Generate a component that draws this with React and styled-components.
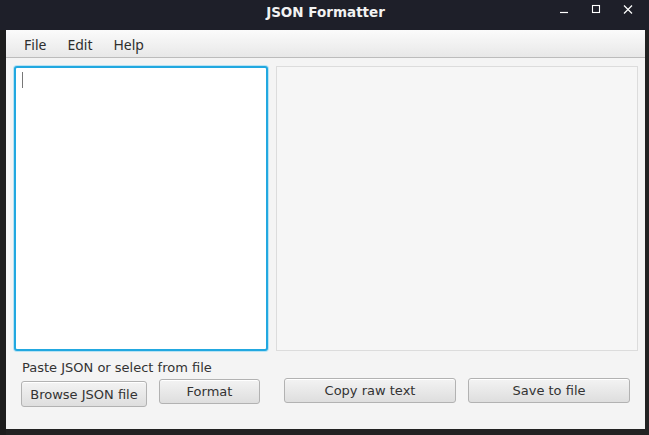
import React from 'react';
import styled, { createGlobalStyle } from 'styled-components';

const GlobalStyle = createGlobalStyle`
  html, body {
    margin: 0;
    padding: 0;
    background: #1f1f1f;
    overflow: hidden;
  }
  * { box-sizing: border-box; }
`;

export default function App() {
  return (
    <>
      <GlobalStyle />
      <SScreen>
        <STitleBar>
          <STitle>JSON Formatter</STitle>
          <SWinControls>
            <SWinButton aria-label="minimize">
              <svg width="12" height="12" viewBox="0 0 12 12">
                <path d="M2 8.5h8" stroke="#fff" strokeWidth="1.2" />
              </svg>
            </SWinButton>
            <SWinButton aria-label="maximize">
              <svg width="12" height="12" viewBox="0 0 12 12">
                <rect x="2.5" y="1.5" width="7" height="7" fill="none" stroke="#fff" strokeWidth="1.1" />
              </svg>
            </SWinButton>
            <SWinButton aria-label="close">
              <svg width="12" height="12" viewBox="0 0 12 12">
                <path d="M2 1.5l8 8M10 1.5l-8 8" stroke="#fff" strokeWidth="1.2" />
              </svg>
            </SWinButton>
          </SWinControls>
        </STitleBar>
        <SDesk>
          <SGutter />
          <SWindow>
            <SMenuBar>
              <SMenuItem>File</SMenuItem>
              <SMenuItem>Edit</SMenuItem>
              <SMenuItem>Help</SMenuItem>
            </SMenuBar>
            <SBody>
              <SEditors>
                <SInput>
                  <SCaret />
                </SInput>
                <SOutput />
              </SEditors>
              <SFooter>
                <SLeftControls>
                  <SHint>Paste JSON or select from file</SHint>
                  <SButtonRow>
                    <SButton $w={126} $h={26} $mt={2}>Browse JSON file</SButton>
                    <SButton $w={101} $h={25}>Format</SButton>
                  </SButtonRow>
                </SLeftControls>
                <SRightControls>
                  <SButton $w={172} $h={25}>Copy raw text</SButton>
                  <SButton $w={162} $h={25}>Save to file</SButton>
                </SRightControls>
              </SFooter>
            </SBody>
          </SWindow>
        </SDesk>
      </SScreen>
    </>
  );
}

const SScreen = styled.div`
  width: 649px;
  height: 435px;
  display: flex;
  flex-direction: column;
  background: #222222;
`;

const STitleBar = styled.div`
  height: 30px;
  flex: none;
  background: #1e1f29;
  position: relative;
  display: flex;
  align-items: center;
  justify-content: center;
`;

const STitle = styled.div`
  font-family: "DejaVu Sans", "Noto Sans", sans-serif;
  font-weight: bold;
  font-size: 13.5px;
  color: #f2f2f2;
  margin-top: -6px;
  margin-left: 2px;
`;

const SWinControls = styled.div`
  position: absolute;
  right: 15px;
  top: 3px;
  display: flex;
  gap: 19px;
`;

const SWinButton = styled.div`
  width: 13px;
  height: 13px;
  display: flex;
  align-items: center;
  justify-content: center;
`;

const SDesk = styled.div`
  flex: 1;
  display: flex;
`;

const SGutter = styled.div`
  width: 6px;
  flex: none;
  background: #1d1d1d;
`;

const SWindow = styled.div`
  width: 639px;
  height: 399px;
  flex: none;
  display: flex;
  flex-direction: column;
  background: #f4f4f4;
`;

const SMenuBar = styled.div`
  height: 28px;
  flex: none;
  display: flex;
  align-items: center;
  padding-left: 12px;
  background: linear-gradient(#fbfbfb, #e8e8e8);
  border-bottom: 1px solid #bcbcbc;
`;

const SMenuItem = styled.div`
  font-family: "Noto Sans", "DejaVu Sans", sans-serif;
  font-size: 14px;
  color: #2e2e2e;
  padding: 0 6px;
  margin-right: 9px;
  margin-top: 1px;
`;

const SBody = styled.div`
  flex: 1;
  display: flex;
  flex-direction: column;
  padding: 8px 7px 0 8px;
`;

const SEditors = styled.div`
  height: 285px;
  display: flex;
  gap: 8px;
`;

const SInput = styled.div`
  width: 254px;
  background: #fff;
  border: 2px solid #22a8e0;
  border-radius: 3px;
  box-shadow: 0 0 0 1px #b8e3f4;
  padding: 4px 6px;
`;

const SCaret = styled.div`
  width: 1px;
  height: 16px;
  background: #777;
`;

const SOutput = styled.div`
  flex: 1;
  background: #f6f6f6;
  border: 1px solid #dcdcdc;
`;

const SFooter = styled.div`
  display: flex;
  justify-content: space-between;
  padding-top: 9px;
`;

const SLeftControls = styled.div`
  display: flex;
  flex-direction: column;
  padding-left: 7px;
`;

const SHint = styled.div`
  font-family: "DejaVu Sans", sans-serif;
  font-size: 13px;
  color: #333;
  line-height: 16px;
  margin-left: 1px;
  margin-bottom: 3px;
`;

const SButtonRow = styled.div`
  display: flex;
  gap: 12px;
  align-items: flex-start;
`;

const SRightControls = styled.div`
  display: flex;
  gap: 12px;
  padding-top: 18px;
  padding-right: 8px;
`;

const SButton = styled.button`
  width: ${(p) => p.$w}px;
  height: ${(p) => p.$h}px;
  margin-top: ${(p) => p.$mt || 0}px;
  padding: 0;
  font-family: "DejaVu Sans", sans-serif;
  font-size: 13px;
  color: #333;
  background: linear-gradient(#f3f3f3, #dedede);
  border: 1px solid #b2b2b2;
  border-radius: 3px;
  box-shadow: inset 0 1px 0 #fff;
`;
